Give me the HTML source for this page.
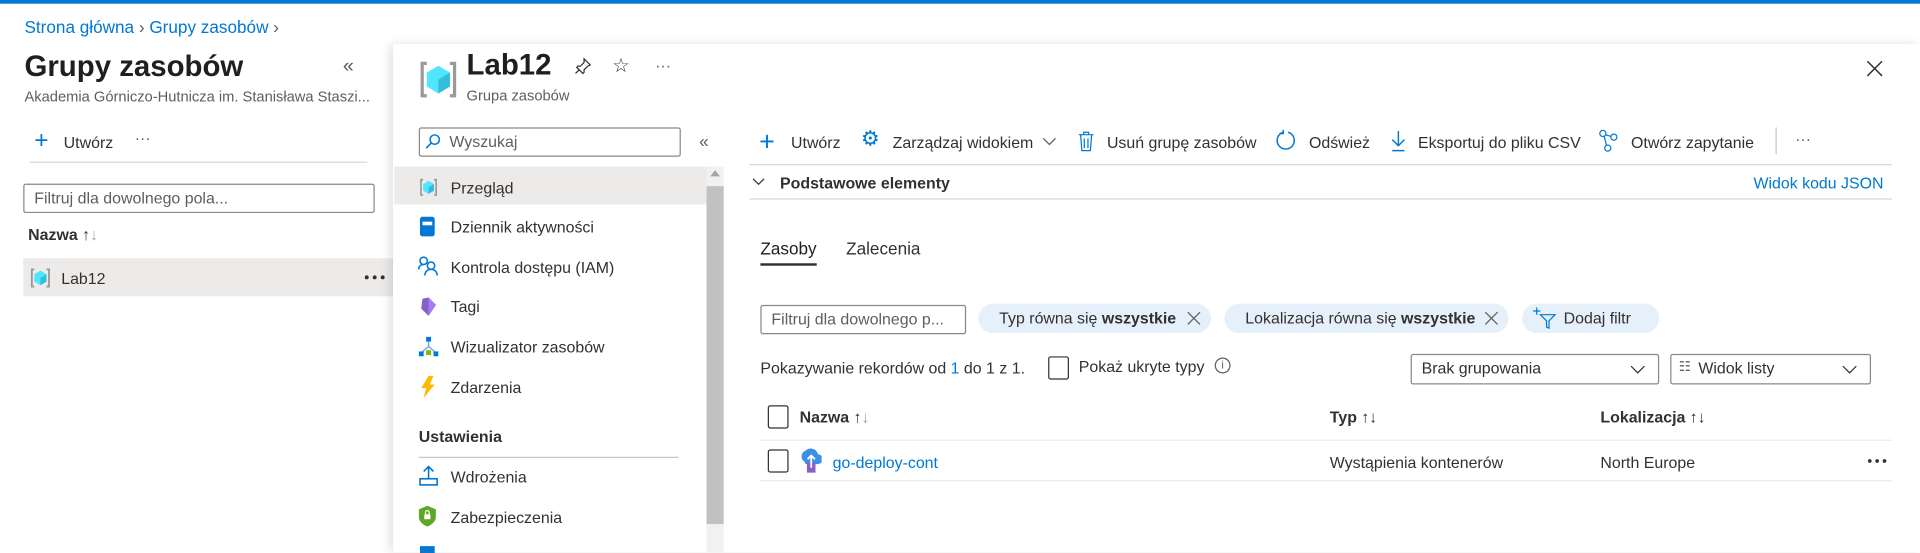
<!DOCTYPE html>
<html><head><meta charset="utf-8"><style>
*{box-sizing:border-box;margin:0;padding:0}
html,body{width:1920px;height:552px;overflow:hidden;background:#fff}
#w{position:absolute;left:0;top:0;width:1568px;height:451px;transform:scale(1.22449);transform-origin:0 0;font-family:"Liberation Sans",sans-serif;font-size:13px;color:#323130}
.a{position:absolute;white-space:nowrap}
.blue{color:#0078d4}
.ln{position:absolute;height:1px;background:#d6d6d6}
.cb{position:absolute;width:17px;height:17px;border:1px solid #323130;border-radius:2px;background:#fff}
.pill{position:absolute;height:24px;border-radius:12px;background:#e6f0fb;line-height:24px;padding-left:17px}
.box{position:absolute;border:1px solid #8a8886;border-radius:2px;height:24px;line-height:22px;padding-left:8px;background:#fff}
.mi{position:absolute;left:368px}
.ic{position:absolute}
</style></head><body><div id="w">
<div class="a" style="left:0;top:0;width:1568px;height:3px;background:#0078d4"></div>
<div class="a blue" style="left:20px;top:14px;font-size:14px">Strona główna <span style="color:#605e5c">&#8250;</span> Grupy zasobów <span style="color:#605e5c">&#8250;</span></div>

<div class="a" style="left:20px;top:41px;font-size:24px;font-weight:600;color:#201f1e">Grupy zasobów</div>
<div class="a" style="left:280px;top:46px;font-size:16px;color:#605e5c">«</div>
<div class="a" style="left:20px;top:72px;font-size:12px;color:#605e5c">Akademia Górniczo-Hutnicza im. Stanisława Staszi...</div>
<div class="a" style="left:28px;top:104px;font-size:20px;color:#0078d4;font-weight:300">+</div>
<div class="a" style="left:52px;top:109px">Utwórz</div>
<div class="a" style="left:110px;top:105px;color:#605e5c">···</div>
<div class="ln" style="left:24px;top:132px;width:276px"></div>
<div class="box" style="left:19px;top:150px;width:287px;color:#605e5c">Filtruj dla dowolnego pola...</div>
<div class="a" style="left:23px;top:184px;font-weight:bold">Nazwa <span style="font-weight:normal">↑<span style="color:#a19f9d">↓</span></span></div>
<div class="a" style="left:19px;top:211px;width:302px;height:31px;background:#edebe9"></div>
<svg class="ic" style="left:24px;top:218px" width="18" height="18" viewBox="0 0 18 18"><path d="M4 2H2v14h2M14 2h2v14h-2" stroke="#999" stroke-width="1.5" fill="none"/><path d="M9 3l5 3v6l-5 3-5-3V6z" fill="#50e6ff"/><path d="M9 9l5-3v6l-5 3z" fill="#32bedd"/></svg>
<div class="a" style="left:50px;top:220px">Lab12</div>
<svg class="ic" style="left:297px;top:224px" width="20" height="5"><circle cx="2.5" cy="2.5" r="1.6" fill="#323130"/><circle cx="9" cy="2.5" r="1.6" fill="#323130"/><circle cx="15.5" cy="2.5" r="1.6" fill="#323130"/></svg>

<div class="a" style="left:321px;top:36px;width:1247px;height:415px;background:#fff;box-shadow:-3px 0 8px rgba(0,0,0,0.12)"></div>
<svg class="ic" style="left:341px;top:48px" width="34" height="34" viewBox="0 0 18 18"><path d="M4 2H2v14h2M14 2h2v14h-2" stroke="#999" stroke-width="1.4" fill="none"/><path d="M9 3l5 3v6l-5 3-5-3V6z" fill="#50e6ff"/><path d="M9 9l5-3v6l-5 3z" fill="#32bedd"/></svg>
<div class="a" style="left:381px;top:40px;font-size:24px;font-weight:600;color:#201f1e">Lab12</div>
<div class="a" style="left:381px;top:71px;font-size:12px;color:#605e5c">Grupa zasobów</div>
<svg class="ic" style="left:468px;top:46px" width="16" height="16" viewBox="0 0 16 16"><path d="M9 2l5 5-2 1-3 3 0 2-1 1-5-5 1-1h2l3-3zM5 11l-3 3" stroke="#323130" fill="none"/></svg>
<div class="a" style="left:500px;top:44px;font-size:16px">☆</div>
<div class="a" style="left:535px;top:46px;color:#605e5c">···</div>
<svg class="ic" style="left:1524px;top:49px" width="14" height="14" viewBox="0 0 14 14"><path d="M1 1l12 12M13 1L1 13" stroke="#323130" stroke-width="1.2"/></svg>

<div class="box" style="left:342px;top:104px;width:214px;padding-left:24px;color:#605e5c">Wyszukaj</div>
<svg class="ic" style="left:347px;top:109px" width="13" height="13" viewBox="0 0 13 13"><circle cx="8" cy="5" r="3.8" stroke="#0078d4" fill="none" stroke-width="1.2"/><path d="M5.3 7.7L1 12" stroke="#0078d4" stroke-width="1.3"/></svg>
<div class="a" style="left:571px;top:107px;font-size:14px;color:#605e5c">«</div>
<div class="a" style="left:322px;top:136px;width:255px;height:31px;background:#edebe9"></div>
<div class="a" style="left:577px;top:136px;width:14px;height:315px;background:#f1f1f1"></div>
<div class="a" style="left:577px;top:152px;width:14px;height:276px;background:#c1c1c1"></div>
<div class="a" style="left:580px;top:139px;width:0;height:0;border-left:4px solid transparent;border-right:4px solid transparent;border-bottom:5px solid #a3a3a3"></div>

<svg class="ic" style="left:342px;top:145px" width="16" height="16" viewBox="0 0 18 18"><path d="M4 2H2v14h2M14 2h2v14h-2" stroke="#999" stroke-width="1.5" fill="none"/><path d="M9 3l5 3v6l-5 3-5-3V6z" fill="#50e6ff"/><path d="M9 9l5-3v6l-5 3z" fill="#32bedd"/></svg>
<div class="mi" style="top:146px">Przegląd</div>
<div class="ic" style="left:343px;top:177px;width:12px;height:16px;background:#0078d4;border-radius:2px"><div style="margin:4px 2px;height:3px;background:#fff"></div></div>
<div class="mi" style="top:178px">Dziennik aktywności</div>
<svg class="ic" style="left:341px;top:209px" width="17" height="17" viewBox="0 0 17 17"><circle cx="5" cy="4" r="3" stroke="#0078d4" fill="none" stroke-width="1.3"/><path d="M1 11c0-3 2-4 4-4" stroke="#0078d4" fill="none" stroke-width="1.3"/><circle cx="11" cy="8" r="3" stroke="#0078d4" fill="none" stroke-width="1.3"/><path d="M6 16c0-3 2-5 5-5s5 2 5 5" stroke="#0078d4" fill="none" stroke-width="1.3"/></svg>
<div class="mi" style="top:211px">Kontrola dostępu (IAM)</div>
<svg class="ic" style="left:342px;top:242px" width="16" height="17" viewBox="0 0 16 17"><path d="M8 1l6 6-6 9-6-6 1-8z" fill="#8661c5"/><path d="M8 1l6 6-6 9z" fill="#a67af4"/></svg>
<div class="mi" style="top:243px">Tagi</div>
<svg class="ic" style="left:342px;top:275px" width="16" height="16" viewBox="0 0 16 16"><rect x="6" y="0" width="4" height="4" fill="#0078d4"/><path d="M8 4v4M2 13l6-5 6 5" stroke="#5ea0ef" fill="none"/><rect x="0" y="12" width="4" height="4" fill="#0078d4"/><rect x="12" y="12" width="4" height="4" fill="#0078d4"/><rect x="6" y="11" width="4" height="4" fill="#7fba00"/></svg>
<div class="mi" style="top:276px">Wizualizator zasobów</div>
<svg class="ic" style="left:343px;top:307px" width="13" height="18" viewBox="0 0 13 18"><path d="M7 0L1 10h4l-2 8 9-11H8l3-7z" fill="#ffb900"/></svg>
<div class="mi" style="top:309px">Zdarzenia</div>
<div class="a" style="left:342px;top:349px;font-weight:bold">Ustawienia</div>
<div class="ln" style="left:342px;top:373px;width:212px;background:#c8c6c4"></div>
<svg class="ic" style="left:342px;top:380px" width="16" height="17" viewBox="0 0 16 17"><path d="M8 1v10M4 5l4-4 4 4" stroke="#0078d4" fill="none" stroke-width="1.3"/><rect x="1" y="11" width="14" height="5" stroke="#0078d4" fill="none" stroke-width="1.3"/></svg>
<div class="mi" style="top:382px">Wdrożenia</div>
<svg class="ic" style="left:342px;top:413px" width="14" height="17" viewBox="0 0 14 17"><path d="M7 0l7 3v6c0 4-4 7-7 8-3-1-7-4-7-8V3z" fill="#5ea825"/><rect x="4.5" y="7" width="5" height="4" fill="#fff"/><path d="M5.5 7V5.5a1.5 1.5 0 013 0V7" stroke="#fff" fill="none"/></svg>
<div class="mi" style="top:415px">Zabezpieczenia</div>
<div class="ic" style="left:343px;top:446px;width:12px;height:6px;background:#0078d4"></div>

<div class="a" style="left:620px;top:103px;font-size:22px;color:#0078d4;font-weight:300">+</div>
<div class="a" style="left:646px;top:109px">Utwórz</div>
<div class="a" style="left:703px;top:104px;font-size:17px;color:#0078d4">⚙</div>
<div class="a" style="left:729px;top:109px">Zarządzaj widokiem</div>
<svg class="ic" style="left:851px;top:112px" width="12" height="8" viewBox="0 0 12 8"><path d="M1 1l5 5 5-5" stroke="#605e5c" fill="none"/></svg>
<svg class="ic" style="left:880px;top:107px" width="14" height="17" viewBox="0 0 14 17"><path d="M1 3h12M5 3V1h4v2M2.5 3l1 13h7l1-13M5.5 6v8M8.5 6v8" stroke="#0078d4" fill="none"/></svg>
<div class="a" style="left:904px;top:109px">Usuń grupę zasobów</div>
<svg class="ic" style="left:1042px;top:106px" width="16" height="18" viewBox="0 0 16 18"><path d="M6 2a7 7 0 104 0" stroke="#0078d4" fill="none" stroke-width="1.2"/><path d="M6 0v3H3" stroke="#0078d4" fill="none" stroke-width="1.2"/></svg>
<div class="a" style="left:1069px;top:109px">Odśwież</div>
<svg class="ic" style="left:1136px;top:106px" width="12" height="18" viewBox="0 0 12 18"><path d="M6 1v12M1 8l5 5 5-5M1 17h10" stroke="#0078d4" fill="none" stroke-width="1.2"/></svg>
<div class="a" style="left:1158px;top:109px">Eksportuj do pliku CSV</div>
<svg class="ic" style="left:1305px;top:106px" width="17" height="18" viewBox="0 0 17 18"><circle cx="4" cy="3" r="2.5" stroke="#0078d4" fill="none"/><circle cx="13" cy="6" r="2.5" stroke="#0078d4" fill="none"/><circle cx="8" cy="15" r="2.5" stroke="#0078d4" fill="none"/><path d="M6 4l5 1.5M5 5l2 8" stroke="#0078d4"/></svg>
<div class="a" style="left:1332px;top:109px">Otwórz zapytanie</div>
<div class="a" style="left:1450px;top:104px;width:1px;height:22px;background:#c8c6c4"></div>
<div class="a" style="left:1466px;top:106px;color:#605e5c">···</div>
<div class="ln" style="left:612px;top:134px;width:933px"></div>
<svg class="ic" style="left:614px;top:145px" width="11" height="7" viewBox="0 0 11 7"><path d="M1 1l4.5 4.5L10 1" stroke="#323130" fill="none"/></svg>
<div class="a" style="left:637px;top:142px;font-weight:600">Podstawowe elementy</div>
<div class="a blue" style="left:1432px;top:142px">Widok kodu JSON</div>
<div class="ln" style="left:612px;top:162px;width:933px"></div>

<div class="a" style="left:621px;top:195px;font-size:14px;color:#201f1e">Zasoby</div>
<div class="a" style="left:621px;top:215px;width:46px;height:2px;background:#323130"></div>
<div class="a" style="left:691px;top:195px;font-size:14px">Zalecenia</div>

<div class="box" style="left:621px;top:249px;width:168px;height:24px;color:#605e5c">Filtruj dla dowolnego p...</div>
<div class="pill" style="left:799px;top:248px;width:190px">Typ równa się <b>wszystkie</b><svg style="position:absolute;right:8px;top:6px" width="12" height="12"><path d="M1 1l10 10M11 1L1 11" stroke="#605e5c"/></svg></div>
<div class="pill" style="left:1000px;top:248px;width:232px">Lokalizacja równa się <b>wszystkie</b><svg style="position:absolute;right:8px;top:6px" width="12" height="12"><path d="M1 1l10 10M11 1L1 11" stroke="#605e5c"/></svg></div>
<div class="pill" style="left:1243px;top:248px;width:112px;padding-left:34px">Dodaj filtr</div>
<svg class="ic" style="left:1252px;top:251px" width="20" height="18" viewBox="0 0 20 18"><path d="M3 0v6M0 3h6" stroke="#0078d4"/><path d="M6 6h12l-5 5v6l-2-1v-5z" stroke="#0078d4" fill="none"/></svg>

<div class="a" style="left:621px;top:293px">Pokazywanie rekordów od <span class="blue">1</span> do 1 z 1.</div>
<div class="cb" style="left:856px;top:291px;width:17px;height:19px"></div>
<div class="a" style="left:881px;top:292px">Pokaż ukryte typy</div>
<div class="a" style="left:992px;top:292px;width:13px;height:13px;border:1px solid #605e5c;border-radius:50%;font-size:9px;text-align:center;line-height:11px;color:#605e5c">i</div>
<div class="box" style="left:1152px;top:289px;width:203px;height:25px">Brak grupowania<svg style="position:absolute;right:10px;top:8px" width="13" height="8"><path d="M1 1l5.5 5.5L12 1" stroke="#323130" fill="none"/></svg></div>
<div class="box" style="left:1364px;top:289px;width:164px;height:25px;padding-left:22px">Widok listy<svg style="position:absolute;right:10px;top:8px" width="13" height="8"><path d="M1 1l5.5 5.5L12 1" stroke="#323130" fill="none"/></svg></div>
<div class="a" style="left:1371px;top:293px;font-size:11px;color:#605e5c">☷</div>

<div class="cb" style="left:627px;top:331px;width:17px;height:19px"></div>
<div class="a" style="left:653px;top:333px;font-weight:bold">Nazwa <span style="font-weight:normal">↑<span style="color:#a19f9d">↓</span></span></div>
<div class="a" style="left:1086px;top:333px;font-weight:bold">Typ <span style="font-weight:normal">↑↓</span></div>
<div class="a" style="left:1307px;top:333px;font-weight:bold">Lokalizacja <span style="font-weight:normal">↑↓</span></div>
<div class="ln" style="left:620px;top:359px;width:925px;background:#edebe9"></div>
<div class="cb" style="left:627px;top:367px;width:17px;height:19px"></div>
<svg class="ic" style="left:654px;top:366px" width="17" height="21" viewBox="0 0 17 21"><path d="M3 11a5 5 0 011-9 6 6 0 0110 3 4 4 0 010 8H4z" fill="#3c91e5"/><rect x="5" y="12" width="7" height="8" fill="#8661c5"/><path d="M8.5 16V6M5.5 9l3-3 3 3" stroke="#fff" stroke-width="1.5" fill="none"/></svg>
<div class="a blue" style="left:680px;top:370px">go-deploy-cont</div>
<div class="a" style="left:1086px;top:370px">Wystąpienia kontenerów</div>
<div class="a" style="left:1307px;top:370px">North Europe</div>
<svg class="ic" style="left:1525px;top:374px" width="18" height="5"><circle cx="2" cy="2.5" r="1.5" fill="#323130"/><circle cx="8" cy="2.5" r="1.5" fill="#323130"/><circle cx="14" cy="2.5" r="1.5" fill="#323130"/></svg>
<div class="ln" style="left:620px;top:392px;width:925px;background:#edebe9"></div>
</div></body></html>
